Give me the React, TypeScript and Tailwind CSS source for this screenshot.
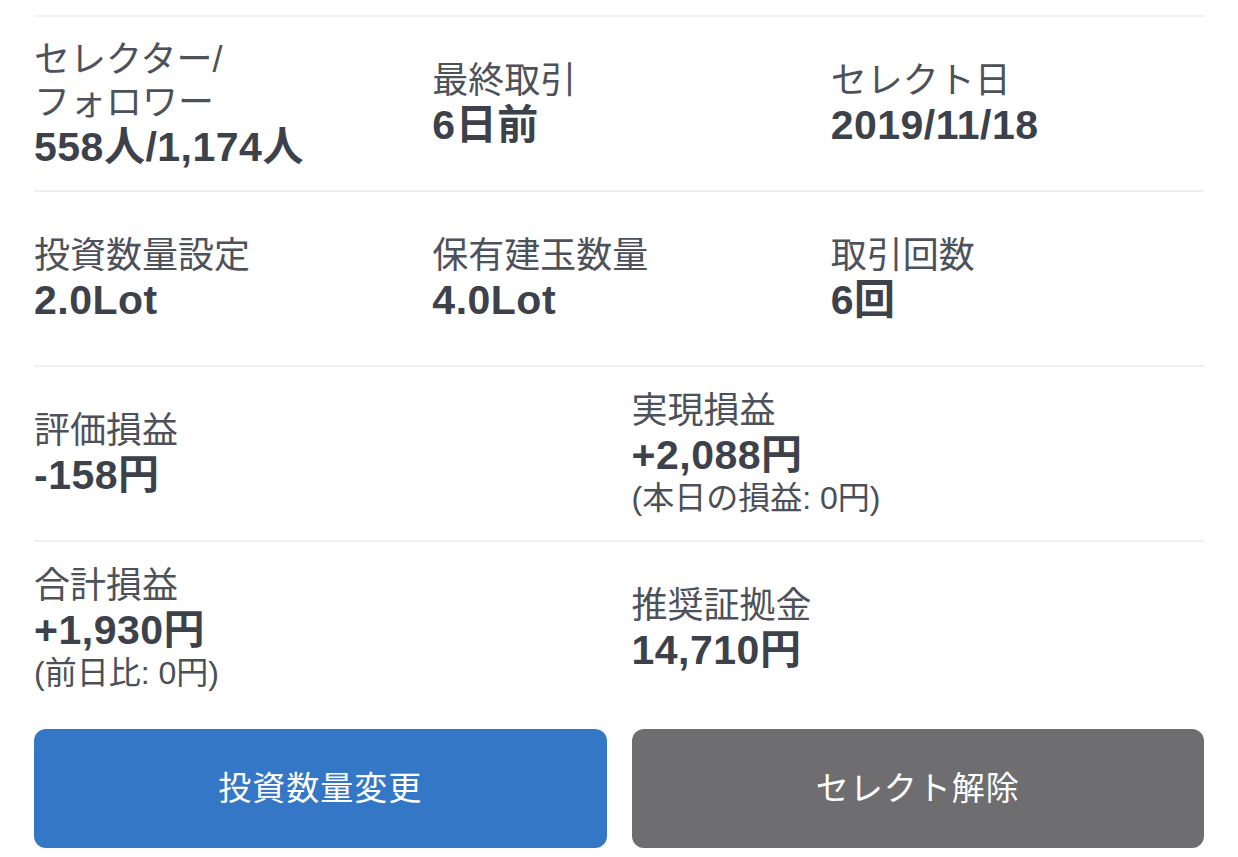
const font = { fontFamily: '"Liberation Sans", "Noto Sans CJK JP", sans-serif' };

type Item = { label: string[]; value: string; sub?: string };

const rows: Item[][] = [
  [
    { label: ["セレクター/", "フォロワー"], value: "558人/1,174人" },
    { label: ["最終取引"], value: "6日前" },
    { label: ["セレクト日"], value: "2019/11/18" },
  ],
  [
    { label: ["投資数量設定"], value: "2.0Lot" },
    { label: ["保有建玉数量"], value: "4.0Lot" },
    { label: ["取引回数"], value: "6回" },
  ],
  [
    { label: ["評価損益"], value: "-158円" },
    { label: ["実現損益"], value: "+2,088円", sub: "(本日の損益: 0円)" },
  ],
  [
    { label: ["合計損益"], value: "+1,930円", sub: "(前日比: 0円)" },
    { label: ["推奨証拠金"], value: "14,710円" },
  ],
];

function Cell({ item }: { item: Item }) {
  return (
    <div className="flex flex-col justify-center">
      {item.label.map((l) => (
        <div key={l} className="text-[36px] leading-[43px] text-[#4d5159]">
          {l}
        </div>
      ))}
      <div className="text-[41px] leading-[46px] font-bold tracking-[0.5px] text-[#3d414a]">
        {item.value}
      </div>
      {item.sub && (
        <div className="text-[32px] leading-[40px] text-[#4b4f57]">{item.sub}</div>
      )}
    </div>
  );
}

export default function App() {
  return (
    <div className="w-[1238px] h-[857px] bg-white overflow-hidden" style={font}>
      <div className="mx-[34px] pt-[15px]">
        {rows.map((row, i) => (
          <div
            key={i}
            className={`h-[175px] border-t-2 border-[#f0f0f4] grid gap-[25px] ${
              row.length === 3 ? "grid-cols-3" : "grid-cols-2"
            }`}
          >
            {row.map((item) => (
              <Cell key={item.value} item={item} />
            ))}
          </div>
        ))}
        <div className="grid grid-cols-2 gap-[25px] mt-[14px]">
          <button className="h-[119px] rounded-xl bg-[#3477c6] text-white text-[33px] tracking-[1px]">
            投資数量変更
          </button>
          <button className="h-[119px] rounded-xl bg-[#6e6e71] text-white text-[33px] tracking-[1px]">
            セレクト解除
          </button>
        </div>
      </div>
    </div>
  );
}
